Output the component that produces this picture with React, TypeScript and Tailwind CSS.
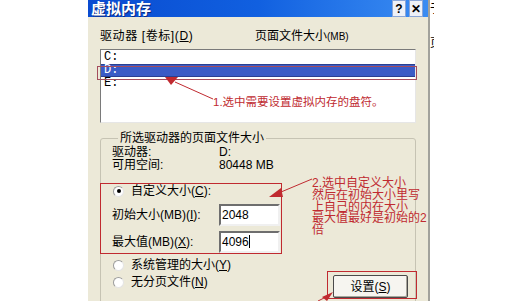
import React from "react";

const red = "#c02a30";

const Radio: React.FC<{ checked?: boolean; children: React.ReactNode }> = ({ checked, children }) => (
    <div className="flex items-center h-[14px]">
        <span className="ml-[1px] w-[11px] h-[11px] rounded-full bg-white border border-[#9c9c9c] border-b-[#e4e4e4] border-r-[#e4e4e4] flex items-center justify-center">
            {checked && <span className="w-[4px] h-[4px] rounded-full bg-black" />}
        </span>
        <span className="ml-[7px]">{children}</span>
    </div>
);

const Field: React.FC<{ value: string; caret?: boolean }> = ({ value, caret }) => (
    <div className="w-[61px] h-[22px] bg-white border-2 border-t-[#6e6e6e] border-l-[#6e6e6e] border-r-[#f0f0f0] border-b-[#f0f0f0] pl-[1px] pt-[2px] text-[12px] leading-[14px] font-['Liberation_Sans',sans-serif]">
        {value}
        {caret && <span className="inline-block w-[1px] h-[13px] bg-black align-top" />}
    </div>
);

const App: React.FC = () => {
    return (
        <div className="relative w-[515px] h-[301px] overflow-hidden bg-white flex text-[12px] leading-[14px] text-black font-['Liberation_Sans','Noto_Sans_CJK_SC',sans-serif]">
            <div className="w-[88px] shrink-0" />

            {/* dialog */}
            <div className="w-[340px] shrink-0 flex flex-col bg-[#ece9d8]">
                <div className="h-[23px] flex items-center justify-between bg-linear-to-r from-[#0a4bd0] via-[#1160e0] to-[#3a8cf2]">
                    <span className="ml-[3px] text-[15px] font-bold text-white [text-shadow:1px_1px_#0a2a80]">虚拟内存</span>
                    <div className="flex gap-[3px] mr-[5px]">
                        <span className="w-[14px] h-[17px] flex items-center justify-center bg-[#eef1f8] border border-[#8aa6d8] text-[12px] font-bold">?</span>
                        <span className="w-[14px] h-[17px] flex items-center justify-center bg-[#eef1f8] border border-[#8aa6d8] text-[12px] font-bold">✕</span>
                    </div>
                </div>

                <div className="flex flex-col px-[12px] pt-[12px]">
                    <div className="flex">
                        <span className="w-[155px] tracking-[0.6px]">驱动器 [卷标](<u>D</u>)</span>
                        <span>页面文件大小<span className="text-[10px]">(MB)</span></span>
                    </div>

                    <div className="mt-[5px] h-[74px] bg-white border border-t-[#7a7a7a] border-l-[#7a7a7a] border-r-[#e6e6e6] border-b-[#e6e6e6] pt-[1px] font-['Liberation_Mono',monospace] text-[12px] leading-[13px]">
                        <div className="pl-[3px] h-[13px]">C:</div>
                        <div className="pl-[3px] h-[13px] bg-[#3a5bc6] text-white border-y border-[#2a3f90] leading-[11px]">D:</div>
                        <div className="pl-[3px] h-[13px]">E:</div>
                    </div>

                    <fieldset className="mt-[8px] border border-[#c6c3b3] rounded-[3px] pl-[11px] pb-[10px] h-[180px]">
                        <legend className="ml-[6px] px-[2px]">所选驱动器的页面文件大小</legend>
                        <div className="flex leading-[13px] mt-[1px]">
                            <span className="w-[107px]">驱动器:</span>
                            <span>D:</span>
                        </div>
                        <div className="flex leading-[13px]">
                            <span className="w-[107px]">可用空间:</span>
                            <span>80448 MB</span>
                        </div>

                        <div className="mt-[12px]">
                            <Radio checked>
                                自定义大小(<u>C</u>):
                            </Radio>
                        </div>
                        <div className="mt-[6px] flex items-center">
                            <span className="w-[107px]">初始大小(MB)(<u>I</u>):</span>
                            <Field value="2048" />
                        </div>
                        <div className="mt-[5px] flex items-center">
                            <span className="w-[107px]">最大值(MB)(<u>X</u>):</span>
                            <Field value="4096" caret />
                        </div>

                        <div className="mt-[5px]">
                            <Radio>
                                系统管理的大小(<u>Y</u>)
                            </Radio>
                        </div>
                        <div className="mt-[3px] flex items-start justify-between">
                            <Radio>
                                无分页文件(<u>N</u>)
                            </Radio>
                            <button className="mr-[7px] w-[75px] h-[23px] rounded-[2px] border border-[#4a4a4a] bg-[#f6f5f0] shadow-[inset_-1px_-1px_#a8a69c]">
                                设置(<u>S</u>)
                            </button>
                        </div>
                    </fieldset>
                </div>
            </div>

            {/* window behind */}
            <div className="flex-1 border-l-2 border-[#a2a29c] bg-white">
                <div className="w-[4px] overflow-hidden mt-[2px]">
                    <span>于</span>
                </div>
                <div className="w-[4px] overflow-hidden mt-[20px]">
                    <span>页</span>
                </div>
            </div>

            {/* annotations */}
            <svg className="absolute inset-0 pointer-events-none" width="515" height="301" viewBox="0 0 515 301">
                <rect x="97.5" y="66.5" width="319" height="13" fill="none" stroke="#a44c5c" strokeWidth="1" />
                <line x1="175" y1="82" x2="213" y2="99" stroke={red} strokeWidth="1" />
                <polygon points="165,77 178,77 171,85" fill={red} />

                <rect x="100.5" y="183.5" width="181" height="70" fill="none" stroke={red} strokeWidth="1" />
                <line x1="281" y1="192" x2="312" y2="179" stroke={red} strokeWidth="1" />
                <polygon points="269,197 281,188 283,197" fill={red} />

                <rect x="327.5" y="271.5" width="89" height="27" fill="none" stroke={red} strokeWidth="1" />
                <line x1="318" y1="301" x2="328" y2="296" stroke={red} strokeWidth="1" />
                <polygon points="333,292 322,297 327,301" fill={red} />
            </svg>

            <div className="absolute left-[213px] top-[96px] text-[11.5px] leading-[12px] text-[#c02a30] whitespace-nowrap">
                1.选中需要设置虚拟内存的盘符。
            </div>
            <div className="absolute left-[312px] top-[178px] text-[12px] leading-[11.75px] text-[#c02a30] whitespace-nowrap">
                <div>2.选中自定义大小</div>
                <div>然后在初始大小里写</div>
                <div>上自己的内在大小</div>
                <div>最大值最好是初始的2</div>
                <div>倍</div>
            </div>
        </div>
    );
};

export default App;
